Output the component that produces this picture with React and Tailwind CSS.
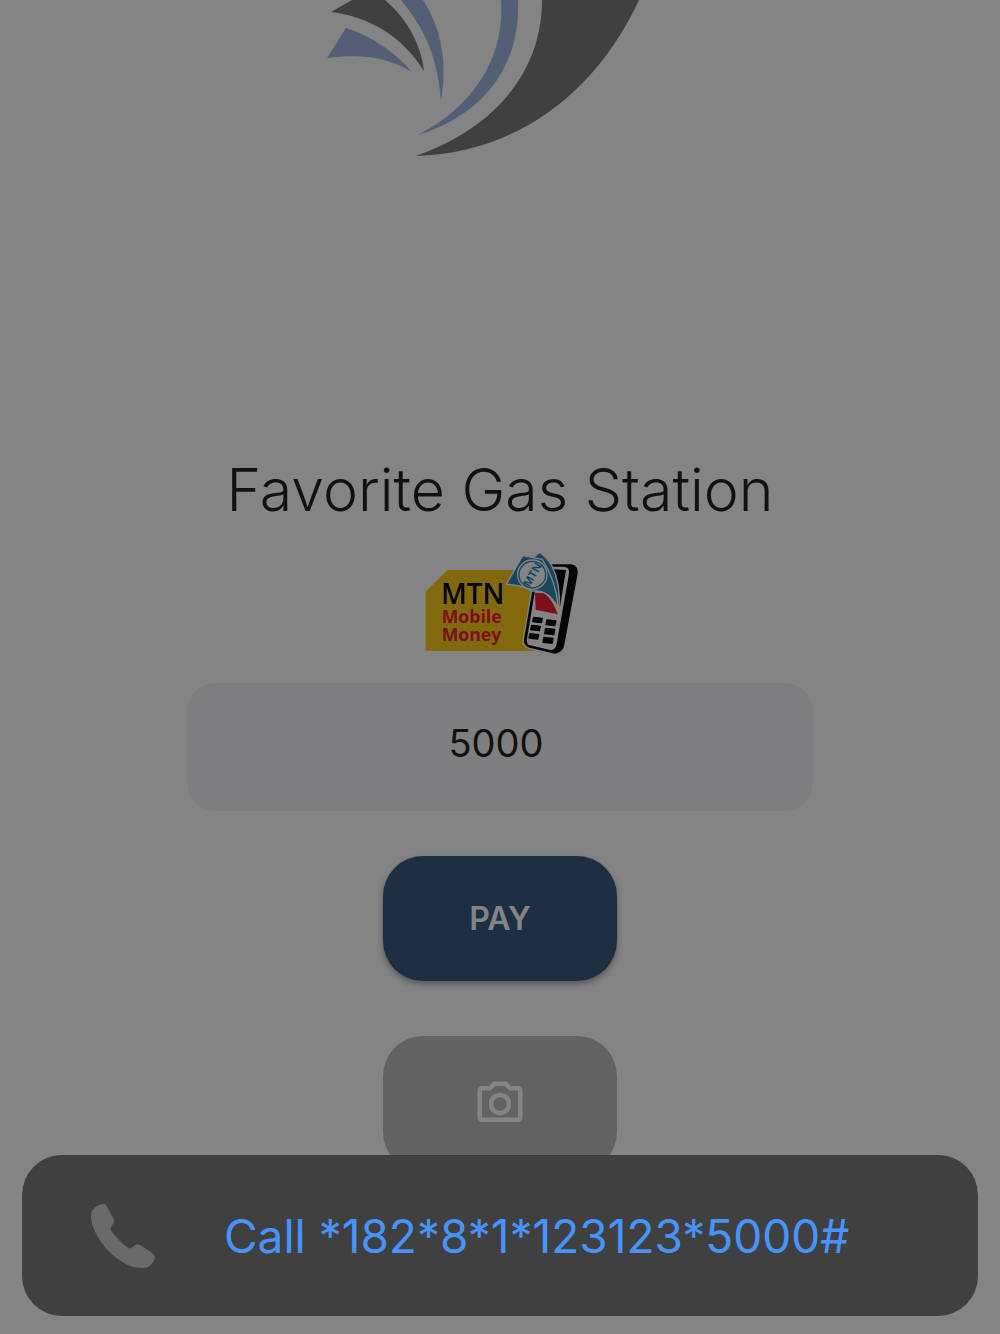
import React from "react";
import { useState } from "react";
import { MdOutlineCameraAlt } from "react-icons/md";

// Station logo
const StationLogo = () => (
    <svg className="w-[350px] h-[160px] shrink-0" viewBox="0 0 350 160" aria-hidden="true">
        <g fill="#404040">
            <path d="M232 0 C232 66 192 125 106 156 C205 153 285 95 329 0 Z" />
            <path d="M42 0 L21 12 C60 17 92 36 114 71 C111 43 96 18 75 0 Z" />
        </g>
        <g fill="#525f75">
            <path d="M191 0 C195 55 166 105 108 135 C174 115 211 65 208 0 Z" />
            <path d="M91 0 C116 30 128 60 131 101 C138 62 131 28 113 0 Z" />
            <path d="M36 28 L17 58 C50 54 75 56 102 72 C84 51 61 36 36 28 Z" />
        </g>
    </svg>
);

// Mobile money badge
const MobileMoneyLogo = () => (
    <svg className="w-[175px] h-[125px] shrink-0" viewBox="0 0 525 375" role="img" aria-label="MTN Mobile Money">
        <path d="M97 90 H360 V333 H32 V155 Z" fill="#83690d" />
        <g fontFamily="'Open Sans', sans-serif">
            <text x="78" y="191" fontSize="84" fontWeight="600" fill="#050505">MTN</text>
            <text x="80" y="249" fontSize="53" fontWeight="700" fill="#7c0f1b">Mobile</text>
            <text x="80" y="303" fontSize="53" fontWeight="700" fill="#7c0f1b">Money</text>
        </g>
        {/* handset */}
        <path d="M376 73 L470 73 Q491 79 488 101 L447 319 Q441 339 420 341 L343 323 Q324 317 327 298 L354 140 Z" fill="#050505" stroke="#848484" strokeWidth="8" />
        <path d="M376 73 L470 73 Q491 79 488 101 L447 319 Q441 339 420 341 L343 323 Q324 317 327 298 L354 140 Z" fill="#050505" />
        <path d="M371 80 L447 80 Q465 82 462 101 L425 312 Q421 331 406 330 L345 316 Q333 313 336 296 L360 150 Z" fill="#848484" />
        <path d="M415 88 L453 90 L435 200 L400 160 Z" fill="#050505" />
        <path d="M360 158 L362 209 L428 223 Q414 180 388 160 Z" fill="#7c0f1b" />
        <g fill="#050505" stroke="#050505" strokeWidth="4" strokeLinejoin="round">
            <path d="M356 232 l26 3 -3 13 -26 -3 Z" />
            <path d="M396 240 l27 3 -4 14 -26 -3 Z" />
            <path d="M350 256 l26 3 -3 13 -26 -3 Z" />
            <path d="M392 265 l27 3 -3 16 -27 -3 Z" />
            <path d="M345 281 l26 3 -3 13 -26 -3 Z" />
            <path d="M387 292 l27 3 -3 15 -27 -3 Z" />
        </g>
        {/* bank notes */}
        <path d="M350 57 L374 37 Q394 50 410 76 Q438 130 432 207 Q404 145 363 154 Z" fill="#16475e" stroke="#848484" strokeWidth="4" />
        <path d="M274 133 L323 47 L382 58 Q424 125 430 203 Q397 144 350 154 Q322 134 274 133 Z" fill="#16475e" stroke="#848484" strokeWidth="4" />
        <circle cx="352" cy="104" r="44" fill="#16475e" stroke="#848484" strokeWidth="4" />
        <circle cx="352" cy="104" r="38" fill="#848484" />
        <text x="352" y="116" fontSize="33" fontWeight="700" fontFamily="'Open Sans', sans-serif" textAnchor="middle" fill="#16475e" transform="rotate(-60 352 104)">MTN</text>
    </svg>
);

// Solid handset icon
const PhoneIcon = () => (
    <svg className="w-[67px] h-[67px] shrink-0" viewBox="30 36 201 201" fill="#6a6a6a" aria-hidden="true">
        <path d="M72 42 Q62 40 44 53 Q32 63 33 82 C34 118 68 172 110 205 C140 227 165 236 192 234 Q210 232 222 212 Q227 202 222 195 Q217 188 180 165 Q174 161 166 165 L154 174 Q148 177 142 172 C122 157 105 140 92 120 Q90 114 94 109 L101 99 Q104 93 101 87 Q86 60 80 48 Q76 42 72 42 Z" />
    </svg>
);

// Payment page
const App = () => {
    const [amount, setAmount] = useState("5000");

    return (
        <div className="min-h-screen bg-[#848484] font-['Inter',sans-serif]">
            <main className="flex flex-col items-center">
                <div className="w-full flex justify-center pr-[30px]">
                    <StationLogo />
                </div>

                <h1 className="mt-[294px] text-[59px] leading-[72px] font-light text-[#111111]">
                    Favorite Gas Station
                </h1>

                <div className="mt-[14px] flex justify-center pl-1">
                    <MobileMoneyLogo />
                </div>

                <input
                    type="text"
                    inputMode="numeric"
                    aria-label="Amount"
                    value={amount}
                    onChange={(e) => setAmount(e.target.value)}
                    className="mt-[18px] w-[626px] max-w-full h-32 rounded-[28px] bg-[#7e7e80] pb-2 pr-2 text-center text-[38px] text-[#111111] outline-none"
                />

                <button
                    type="button"
                    className="mt-[45px] w-[234px] h-[125px] rounded-[40px] bg-[#1d2f41] text-[32px] font-semibold text-[#848484] shadow-[0_3px_6px_rgba(0,0,0,0.35)]"
                >
                    PAY
                </button>

                <button
                    type="button"
                    aria-label="Scan"
                    className="mt-[55px] w-[234px] h-[136px] rounded-[40px] bg-[#626262] text-[#848484] flex items-center justify-center"
                >
                    <MdOutlineCameraAlt className="w-[54px] h-[54px]" />
                </button>
            </main>

            {/* Call prompt over the page */}
            <div className="fixed inset-x-[22px] bottom-[18px]">
                <button
                    type="button"
                    className="w-full h-[161px] rounded-[40px] bg-[#404040] flex items-center pl-[68px] text-left"
                >
                    <PhoneIcon />
                    <span className="ml-[67px] text-[46px] leading-[56px] whitespace-nowrap text-[#4794ff] [font-feature-settings:'calt'_0]">
                        Call *182*8*1*123123*5000#
                    </span>
                </button>
            </div>
        </div>
    );
};

export default App;
